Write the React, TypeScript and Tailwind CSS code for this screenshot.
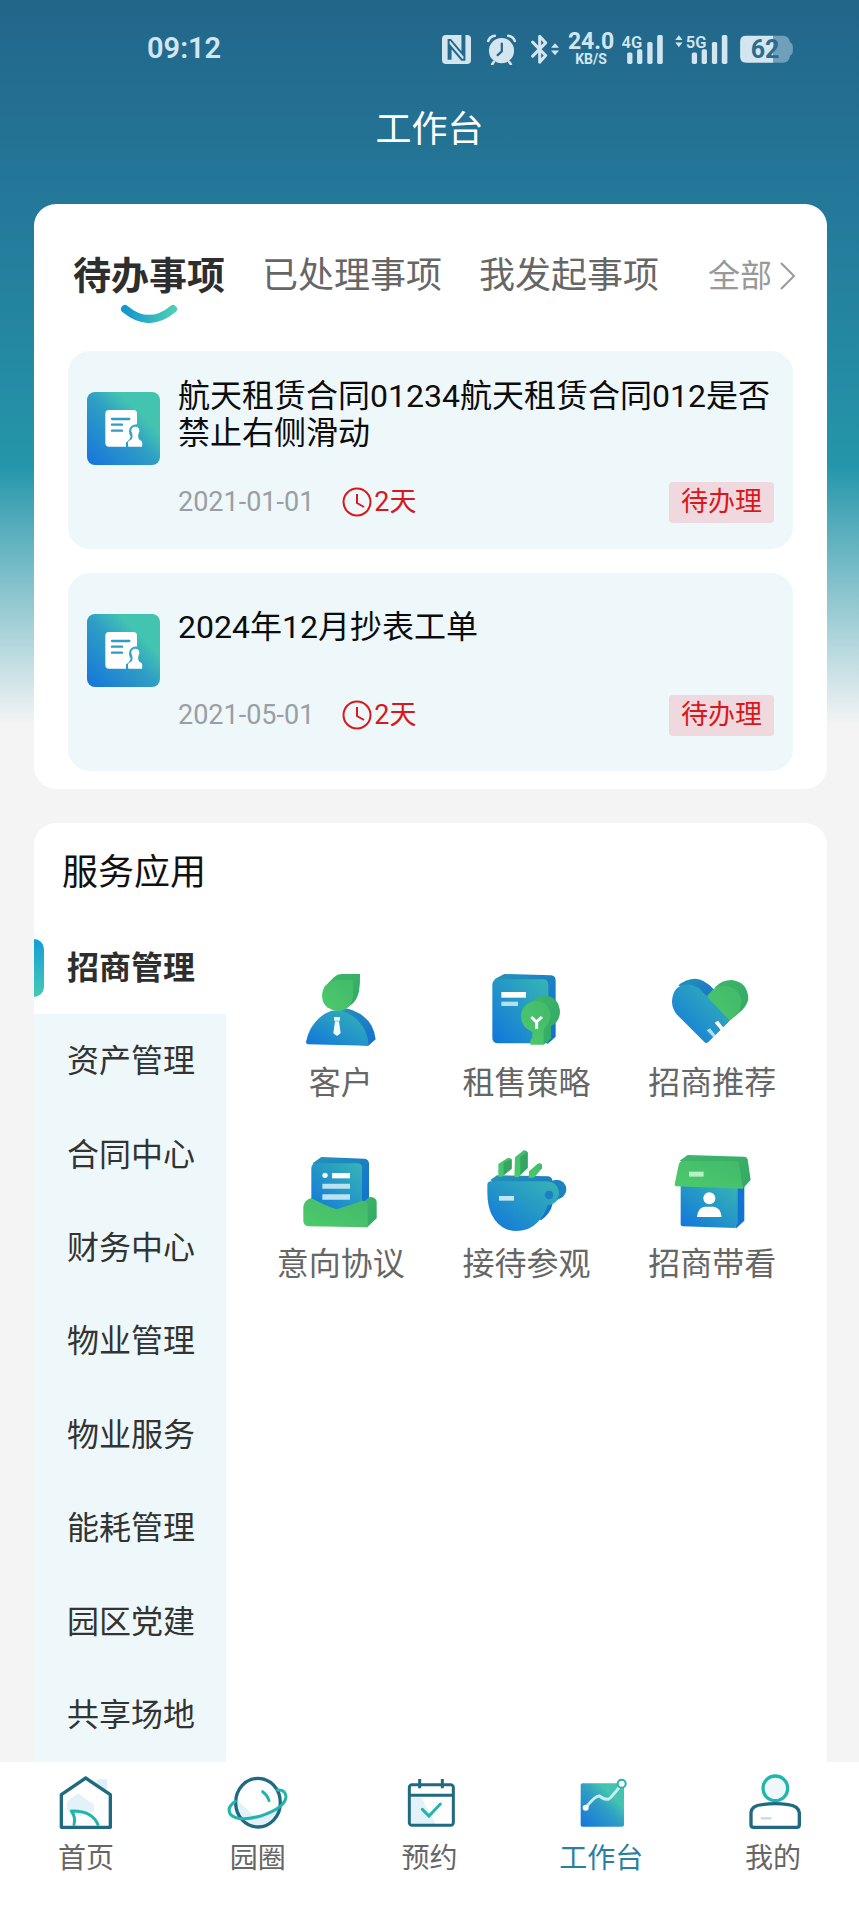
import { useState } from "react";

const categories = [
  "招商管理",
  "资产管理",
  "合同中心",
  "财务中心",
  "物业管理",
  "物业服务",
  "能耗管理",
  "园区党建",
  "共享场地",
];

const tasks = [
  {
    id: 1,
    title: "航天租赁合同01234航天租赁合同012是否禁止右侧滑动",
    date: "2021-01-01",
    left: "2天",
    status: "待办理",
  },
  {
    id: 2,
    title: "2024年12月抄表工单",
    date: "2021-05-01",
    left: "2天",
    status: "待办理",
  },
];

const apps = [
  { name: "客户", icon: <CustomerIcon /> },
  { name: "租售策略", icon: <StrategyIcon /> },
  { name: "招商推荐", icon: <HeartIcon /> },
  { name: "意向协议", icon: <AgreementIcon /> },
  { name: "接待参观", icon: <CupIcon /> },
  { name: "招商带看", icon: <ShopIcon /> },
];

const navs = [
  { name: "首页", icon: <HomeIcon /> },
  { name: "园圈", icon: <PlanetIcon /> },
  { name: "预约", icon: <CalendarIcon /> },
  { name: "工作台", icon: <WorkIcon /> },
  { name: "我的", icon: <MineIcon /> },
];

/* shared gradients for every icon on the page */
function Gradients() {
  return (
    <svg className="absolute h-0 w-0" aria-hidden="true">
      <defs>
        <linearGradient id="blue" x1="0" y1="1" x2="1" y2="0">
          <stop offset="0" stopColor="#1175dc" />
          <stop offset="0.5" stopColor="#2496c8" />
          <stop offset="1" stopColor="#36b5b4" />
        </linearGradient>
        <linearGradient id="blueDark" x1="0" y1="0" x2="1" y2="1">
          <stop offset="0" stopColor="#2593b8" />
          <stop offset="1" stopColor="#126fd0" />
        </linearGradient>
        <linearGradient id="green" x1="0" y1="1" x2="1" y2="0">
          <stop offset="0" stopColor="#4dca6c" />
          <stop offset="1" stopColor="#42b96a" />
        </linearGradient>
        <linearGradient id="greenDark" x1="0" y1="0" x2="1" y2="1">
          <stop offset="0" stopColor="#3db768" />
          <stop offset="1" stopColor="#33a866" />
        </linearGradient>
        <linearGradient id="task" x1="0" y1="1" x2="1" y2="0">
          <stop offset="0" stopColor="#1574dc" />
          <stop offset="0.5" stopColor="#2f9fc4" />
          <stop offset="0.72" stopColor="#43c4b0" />
          <stop offset="1" stopColor="#43c4b0" />
        </linearGradient>
        <linearGradient id="smile" x1="0" y1="0" x2="1" y2="0">
          <stop offset="0" stopColor="#1496cf" />
          <stop offset="1" stopColor="#4bcdb6" />
        </linearGradient>
      </defs>
    </svg>
  );
}

function StatusBar() {
  return (
    <div className="flex h-[98px] items-center pl-[147px] pr-[66px] text-[#d3e6ef]">
      <span className="text-[29px] font-semibold">09:12</span>
      <div className="ml-auto flex items-center">
        <svg viewBox="66 57 88 88" className="h-[29px] w-[29px]">
          <rect x="66" y="57" width="88" height="88" rx="12" fill="currentColor" />
          <path
            d="M86 132V72h6l36 42V57M134 57v75h-8L92 92v40"
            fill="none"
            stroke="#23698b"
            strokeWidth="6"
          />
        </svg>
        <svg viewBox="200 53 90 95" className="ml-4 h-[31px] w-[29px]">
          <circle cx="245" cy="104" r="39" fill="currentColor" />
          <path
            d="M204 74q4-13 20-16M286 74q-4-13-20-16M221 139l-5 7M269 139l5 7"
            stroke="currentColor"
            strokeWidth="8"
            strokeLinecap="round"
            fill="none"
          />
          <path
            d="M246 82v24l-13 12"
            stroke="#23698b"
            strokeWidth="7"
            strokeLinecap="round"
            fill="none"
          />
        </svg>
        <svg viewBox="332 56 84 92" className="ml-[15px] h-[31px] w-[28px]">
          <path
            d="M337 80l39 40-18 20V62l18 20-39 40"
            stroke="currentColor"
            strokeWidth="9"
            strokeLinejoin="round"
            strokeLinecap="round"
            fill="none"
          />
          <path d="M392 97l12-14 12 14zM392 105l12 14 12-14z" fill="currentColor" />
        </svg>
        <div className="ml-[9px] flex w-[46px] flex-col items-center font-bold">
          <span className="text-[23px] leading-[20px]">24.0</span>
          <span className="text-[14px] leading-[14px]">KB/S</span>
        </div>
        <svg viewBox="606 54 126 94" className="ml-2 h-[31px] w-[42px]" fill="currentColor">
          <text x="604" y="95" fontSize="50" fontWeight="600">
            4G
          </text>
          <rect x="621" y="110" width="16" height="35" rx="5" />
          <rect x="651" y="100" width="16" height="45" rx="5" />
          <rect x="682" y="78" width="16" height="67" rx="5" />
          <rect x="712" y="57" width="17" height="88" rx="5" />
        </svg>
        <svg viewBox="764 54 159 94" className="ml-[11px] h-[31px] w-[53px]" fill="currentColor">
          <path d="M764 72l11-14 11 14zM764 80l11 14 11-14z" />
          <text x="796" y="95" fontSize="50" fontWeight="600">
            5G
          </text>
          <rect x="814" y="110" width="16" height="35" rx="5" />
          <rect x="844" y="100" width="16" height="45" rx="5" />
          <rect x="875" y="78" width="16" height="67" rx="5" />
          <rect x="905" y="57" width="17" height="88" rx="5" />
        </svg>
        <svg viewBox="960 60 160 88" className="ml-3 h-[29px] w-[53px]">
          <path
            d="M978 62h112q18 0 22 20q8 4 8 14v14q0 8-8 12q-4 22-22 22H1060V62z"
            fill="#6f9fb9"
          />
          <path d="M978 62h82v82h-82q-18 0-18-18V80q0-18 18-18z" fill="currentColor" />
          <text x="992" y="130" fontSize="76" fontWeight="700" fill="#2a6c8e">
            62
          </text>
        </svg>
      </div>
    </div>
  );
}

function TaskIcon() {
  return (
    <svg viewBox="171 576 219 219" className="h-[73px] w-[73px] shrink-0">
      <rect x="171" y="576" width="219" height="219" rx="24" fill="url(#task)" />
      <path
        d="M237 630h73q11 0 11 11v32q-22 0-24 20q0 10 5 16q-2 12-14 18v13h-51q-11 0-11-11v-88q0-11 11-11z"
        fill="#fff"
      />
      <path
        d="M246 657h52M246 674h30M246 692h30"
        stroke="#2f9cc4"
        strokeWidth="7"
        strokeLinecap="round"
      />
      <path
        d="M316 680a12 12 0 0 1 10 19q-3 6 0 18l9 7q3 3 1 16h-41q-3-12 1-16l10-7q3-12 0-18a12 12 0 0 1 10-19z"
        fill="#fff"
      />
    </svg>
  );
}

function ClockIcon() {
  return (
    <svg viewBox="0 0 30 30" className="h-[30px] w-[30px]" fill="none" stroke="#d8181c">
      <circle cx="15" cy="15" r="13.5" strokeWidth="2" />
      <path d="M15 7v9l7 4" strokeWidth="2" />
    </svg>
  );
}

function CustomerIcon() {
  return (
    <svg viewBox="63 57 240 240" className="h-20 w-20 overflow-visible">
      <path d="M170 178q24-8 46 2q64 24 71 88l-22 19-60-4z" fill="url(#blueDark)" />
      <path
        d="M78 276q4-22 14-40q26-42 62-54q18-4 36 2q60 22 74 84q1 8 1 19l-181-4q-6-1-6-7z"
        fill="url(#blue)"
      />
      <path
        d="M132 112l30-30q10-10 22-10h56q1 30-3 52q-6 30-28 44l-20 12z"
        fill="url(#greenDark)"
      />
      <path
        d="M170 90h50v36q0 32-18 48q-14 12-36 8q-40-8-40-46q2-36 44-46z"
        fill="url(#green)"
      />
      <path d="M162 201h18v11h-18zM165 214h12l5 36-11 8-11-8z" fill="#eef9fb" />
    </svg>
  );
}

function StrategyIcon() {
  return (
    <svg viewBox="621 57 240 240" className="h-20 w-20 overflow-visible">
      <path d="M646 88l30-16 140 4q14 1 14 16v168l-24 22-60-80z" fill="url(#blueDark)" />
      <path
        d="M656 88h136q16 0 16 17v175H657q-17-1-17-17V105q0-17 16-17z"
        fill="url(#blue)"
      />
      <path
        d="M758 156q18-20 42-19q40 4 43 49q-2 32-27 42v38l-22 18-34-60z"
        fill="url(#greenDark)"
      />
      <path
        d="M770 152q42 2 44 46q-2 24-20 40v46h-40v-12q2-6 6-9v-17q-34-14-34-48q4-40 44-46z"
        fill="url(#green)"
      />
      <path d="M667 126h74v17h-74z" fill="#fff" />
      <path d="M667 155h50v13h-50z" fill="#b4e0ea" />
      <path d="M757 201l15 15 17-15M773 216v21" fill="none" stroke="#fff" strokeWidth="9" />
    </svg>
  );
}

function HeartIcon() {
  return (
    <svg viewBox="333 57 240 240" className="h-20 w-20 overflow-visible">
      <path d="M352 106q24-20 50-20q28 0 56 32l-10 50z" fill="url(#blueDark)" />
      <path d="M462 112q20-22 50-22q48 6 50 56q-2 16-18 34l-40 34z" fill="url(#greenDark)" />
      <path
        d="M440 136q20-28 48-29q48 2 53 48q-1 14-6 28l-94 92q-4 3-6 4z"
        fill="url(#green)"
      />
      <path
        d="M348 114q18-12 40-10q14 1 28 12l90 96-64 64q-7 6-12 0l-82-82q-16-18-15-42q2-24 15-38z"
        fill="url(#blue)"
      />
      <path d="M461 218l10-6 17 22-8 7z" fill="#fff" />
      <path d="M437 241l10-6 17 21-7 6z" fill="#b4dcf0" />
    </svg>
  );
}

function AgreementIcon() {
  return (
    <svg viewBox="63 600 240 240" className="h-20 w-20 overflow-visible">
      <path d="M240 744l32-3q18 2 18 16v48l-30 28z" fill="url(#greenDark)" />
      <path d="M98 640l26-19 130 5q12 2 13 14v102l-30 26z" fill="url(#blueDark)" />
      <path
        d="M108 640h126q12 1 12 13v112l-76 22-76-20V654q1-13 14-14z"
        fill="url(#blue)"
      />
      <path
        d="M94 744q40 22 76 34q38-12 76-26q18 0 17 15v65l-178-3q-14-1-15-15v-46q4-18 24-24z"
        fill="url(#green)"
      />
      <circle cx="135" cy="676" r="8" fill="#fff" />
      <path d="M156 669h54v16h-54z" fill="#fff" />
      <path d="M127 701h83v15h-83zM127 733h83v16h-83z" fill="#b9e2f3" />
    </svg>
  );
}

function CupIcon() {
  return (
    <svg viewBox="621 600 240 240" className="h-20 w-20 overflow-visible">
      <path d="M634 690l20-14 154 3q10 2 12 12v74q-6 26-34 46z" fill="url(#blueDark)" />
      <circle cx="833" cy="718" r="29" fill="#1c82c2" />
      <path d="M812 764l36-22-10-30-30 14z" fill="#1c82c2" />
      <path d="M658 642l28-18q12-1 12 6v26l-29 24h-11z" fill="url(#green)" />
      <path d="M708 622l26-21q12 0 12 9v44l-28 28h-12z" fill="url(#green)" />
      <path d="M750 664l26-23q12-3 13 4v10l-24 28h-16z" fill="url(#green)" />
      <path d="M674 638l24-10v28l-24 20z" fill="#38a464" />
      <path d="M724 620l22-14v48l-22 20z" fill="#38a464" />
      <path
        d="M625 704q1-10 12-10h158q44-2 45 38q-4 32-34 34q-18 54-62 72q-30 10-62 0q-58-28-57-114z"
        fill="url(#blue)"
      />
      <circle cx="810" cy="735" r="13" fill="#1b7fc4" />
      <path d="M660 738h45v14h-45z" fill="#c3e5f5" />
    </svg>
  );
}

function ShopIcon() {
  return (
    <svg viewBox="333 600 240 240" className="h-20 w-20 overflow-visible">
      <path d="M520 700h30v112l-26 24z" fill="#1273d2" />
      <path d="M359 704h171v116l-8 14-158-5q-5-1-5-6z" fill="url(#blue)" />
      <path d="M356 632l24-17 170 5q8 0 10 8l9 62-24 26z" fill="url(#greenDark)" />
      <path d="M366 633h158q8 0 10 8l12 75-200-7q-6-1-5-6l12-58q2-11 13-12z" fill="url(#green)" />
      <path d="M384 665h44v15h-44z" fill="#b8efc4" />
      <circle cx="445" cy="745" r="18" fill="#fff" />
      <path d="M408 801q4-31 24-31h26q20 2 24 31z" fill="#fff" />
    </svg>
  );
}

function HomeIcon() {
  return (
    <svg viewBox="168 99 180 180" className="h-[60px] w-[60px]" fill="none">
      <path d="M290 118h31v34l-31-18z" fill="#dceef6" />
      <path d="M200 186l34-26 48 34v20l-40 14-42-18z" fill="#e3f1f8" />
      <path
        d="M184 164l73-50 74 50v98H184z"
        stroke="#1f6a80"
        strokeWidth="10"
        strokeLinejoin="round"
      />
      <path
        d="M222 254q6-22-8-41q62-2 80 41"
        stroke="#22b5ac"
        strokeWidth="9"
        strokeLinecap="round"
        strokeLinejoin="round"
      />
    </svg>
  );
}

function PlanetIcon() {
  return (
    <svg viewBox="684 99 180 180" className="h-[60px] w-[60px] overflow-visible" fill="none">
      <path d="M712 182q20 14 46 44l66-6q-16 36-52 36-44-4-60-50z" fill="#e3f1f8" />
      <ellipse cx="774" cy="188" rx="67" ry="73" stroke="#1f6a80" strokeWidth="10" />
      <path
        d="M706 184q-28 20-14 40q22 22 90 4q74-24 76-58q-2-22-26-20"
        stroke="#22b5ac"
        strokeWidth="9"
        strokeLinecap="round"
      />
      <path d="M788 155q14 10 19 27" stroke="#22b5ac" strokeWidth="9" strokeLinecap="round" />
    </svg>
  );
}

function CalendarIcon() {
  return (
    <svg viewBox="1198 99 180 180" className="h-[60px] w-[60px]" fill="none">
      <path d="M1234 172h30l44 80h-74z" fill="#e3f1f8" />
      <rect x="1229" y="134" width="132" height="122" rx="8" stroke="#1f6a80" strokeWidth="9" />
      <path d="M1229 166h132M1260 117v28M1328 117v28" stroke="#1f6a80" strokeWidth="9" />
      <path
        d="M1268 208l20 20 34-36"
        stroke="#22b5ac"
        strokeWidth="9"
        strokeLinecap="round"
      />
    </svg>
  );
}

function WorkIcon() {
  return (
    <svg viewBox="424 99 180 180" className="h-[60px] w-[60px]" fill="none">
      <rect x="453" y="130" width="130" height="130" rx="6" fill="url(#task)" />
      <path
        d="M469 202q28-36 40-34q12 10 26 10q8-2 38-42"
        stroke="#c9ecee"
        strokeWidth="9"
      />
      <circle cx="468" cy="203" r="9" fill="#fff" />
      <circle cx="576" cy="131" r="12" fill="#fff" stroke="#2cb0ac" strokeWidth="6" />
    </svg>
  );
}

function MineIcon() {
  return (
    <svg viewBox="939 99 180 180" className="h-[60px] w-[60px]" fill="none">
      <circle cx="1036" cy="145" r="37" fill="#eff7fb" stroke="#22b5ac" strokeWidth="10" />
      <path
        d="M963 254v-36q2-22 34-24q38-6 78 0q30 4 33 24v36q0 8-8 8H971q-8 0-8-8z"
        stroke="#1f6a80"
        strokeWidth="10"
      />
      <path d="M992 235h32" stroke="#b9d9e4" strokeWidth="6" />
    </svg>
  );
}

function Tasks() {
  return (
    <section className="rounded-[22px] bg-white pb-[18px] pt-12">
      <div className="flex h-12 items-center gap-[37px] pl-[39px] pr-[31px] text-[36px] leading-[48px] text-[#666]">
        <button className="relative whitespace-nowrap text-[38px] font-bold text-[#2e2e2e]">
          待办事项
          <svg
            viewBox="0 0 56 20"
            className="absolute left-1/2 top-full h-5 w-14 -translate-x-1/2 translate-y-1"
            fill="none"
          >
            <path d="M4 5q24 20 48 0" stroke="url(#smile)" strokeWidth="8" strokeLinecap="round" />
          </svg>
        </button>
        <button className="whitespace-nowrap">已处理事项</button>
        <button className="whitespace-nowrap">我发起事项</button>
        <a href="#all" className="ml-auto flex items-center gap-2 text-[32px] text-[#999]">
          <span className="whitespace-nowrap">全部</span>
          <svg viewBox="0 0 16 28" className="h-7 w-4" fill="none" stroke="#999" strokeWidth="2">
            <path d="M1 1l13 13L1 27" />
          </svg>
        </a>
      </div>
      <ul className="mt-[51px] flex flex-col gap-6 px-[34px]">
        {tasks.map((t) => (
          <li
            key={t.id}
            className="flex min-h-[198px] gap-[18px] rounded-[22px] bg-[#eef7fa] px-[19px]"
          >
            <div className="pt-[41px]">
              <TaskIcon />
            </div>
            <div className="flex flex-1 flex-col justify-center gap-[30px]">
              <h3 className="min-h-[56px] text-[32px] leading-[37px] text-[#0c0c0c]">{t.title}</h3>
              <div className="flex items-center text-[27px] text-[#999fa2]">
                <time>{t.date}</time>
                <span className="ml-7 flex items-center gap-[2px] text-[#d8181c]">
                  <ClockIcon />
                  {t.left}
                </span>
                <span className="ml-auto rounded bg-[#f0d9de] px-3 leading-[41px] text-[#d8181c]">
                  {t.status}
                </span>
              </div>
            </div>
          </li>
        ))}
      </ul>
    </section>
  );
}

function Services() {
  const [active, setActive] = useState("招商管理");

  return (
    <section className="mt-[34px] flex flex-1 flex-col rounded-t-[22px] bg-white">
      <h2 className="flex h-[98px] items-center pl-7 pt-[2px] text-[36px] text-[#111]">服务应用</h2>
      <div className="flex flex-1">
        <ul className="flex w-48 shrink-0 flex-col">
          {categories.map((c) => (
            <li key={c} className="flex min-h-20 flex-1">
              {c === active ? (
                <button className="flex flex-1 items-center bg-white text-[32px] font-bold text-[#2e2e2e]">
                  <span className="h-[58px] w-[10px] rounded-r-[10px] bg-linear-to-b from-[#119fd4] to-[#45c9b5]" />
                  <span className="pl-[23px]">{c}</span>
                </button>
              ) : (
                <button
                  className="flex flex-1 items-center bg-[#eef8fa] pl-[33px] text-[32px] text-[#333]"
                  onClick={() => setActive(c)}
                >
                  {c}
                </button>
              )}
            </li>
          ))}
        </ul>
        <div className="grid flex-1 grid-cols-3 content-start gap-y-12 px-[22px] pt-12">
          {apps.map((a) => (
            <a
              key={a.name}
              href="#app"
              className="flex flex-col items-center gap-[15px] text-[32px] leading-[38px] text-[#666]"
            >
              {a.icon}
              <span className="whitespace-nowrap">{a.name}</span>
            </a>
          ))}
        </div>
      </div>
    </section>
  );
}

export default function App() {
  return (
    <div className="flex min-h-screen flex-col bg-[#f4f4f4] bg-[linear-gradient(to_bottom,#22668a_0px,#24799a_210px,#2496aa_465px,#f4f4f4_725px)] font-[Roboto,'Noto_Sans_CJK_SC',sans-serif]">
      <Gradients />
      <StatusBar />
      <h1 className="flex h-[60px] items-center justify-center pt-[3px] text-[36px] text-white">
        工作台
      </h1>
      <main className="mt-[46px] flex flex-1 flex-col pl-[34px] pr-8">
        <Tasks />
        <Services />
      </main>
      <nav className="grid grid-cols-5 bg-white pb-[43px] pt-[11px]">
        {navs.map((n) => (
          <a
            key={n.name}
            href="#nav"
            className={
              n.name === "工作台"
                ? "flex flex-col items-center gap-2 text-[28px] leading-9 text-[#2a7f9f]"
                : "flex flex-col items-center gap-2 text-[28px] leading-9 text-[#666]"
            }
          >
            {n.icon}
            <span>{n.name}</span>
          </a>
        ))}
      </nav>
    </div>
  );
}
